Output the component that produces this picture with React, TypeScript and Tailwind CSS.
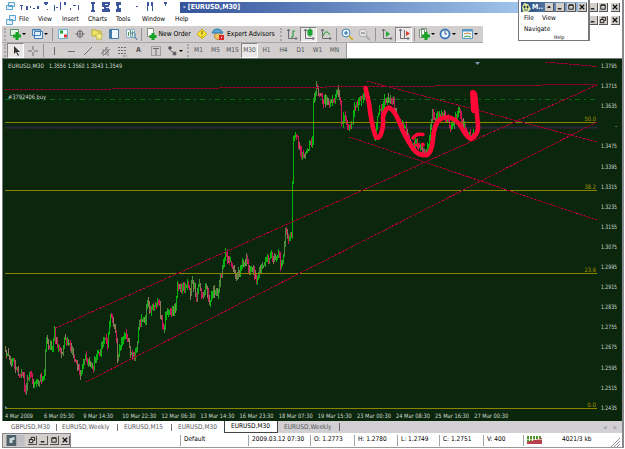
import type { ReactNode } from "react";

const points: [number, number][] = [
  [5, 351], [8, 354], [11, 365], [14, 360], [17, 368], [19, 372], [22, 374], [24, 378], [26, 394], [28, 380], [31, 374],
  [33, 381], [36, 385], [40, 381], [44, 377], [45, 370], [46, 350], [47, 337], [49, 346], [53, 348], [55, 332], [57, 343],
  [60, 348], [63, 353], [64, 345], [66, 337], [70, 347], [74, 354], [77, 363], [80, 370], [82, 374], [85, 356], [89, 363],
  [93, 369], [97, 358], [101, 350], [105, 337], [108, 343], [110, 325], [111, 314], [113, 321], [116, 330], [118, 357],
  [120, 350], [123, 342], [126, 334], [129, 343], [131, 353], [134, 358], [137, 349], [140, 322], [144, 322], [146, 318],
  [148, 301], [151, 309], [154, 310], [157, 305], [160, 307], [162, 322], [164, 329], [167, 315], [170, 308], [174, 312],
  [176, 308], [178, 284], [181, 289], [185, 287], [188, 283], [191, 292], [193, 280], [195, 287], [197, 295], [200, 286],
  [203, 297], [207, 288], [210, 302], [214, 290], [217, 293], [219, 290], [221, 278], [223, 270], [225, 257], [227, 253],
  [229, 263], [232, 263], [236, 275], [240, 275], [243, 265], [247, 260], [250, 270], [254, 268], [257, 282], [260, 272],
  [264, 264], [268, 260], [272, 258], [275, 257], [279, 253], [281, 265], [284, 255], [286, 230], [289, 237], [292, 235],
  [293, 180], [294, 141], [297, 135], [299, 146], [304, 157], [309, 146], [313, 142], [314, 100], [317, 86], [320, 95],
  [323, 100], [327, 99], [331, 106], [335, 98], [338, 91], [341, 99], [342, 125], [345, 112], [348, 130], [353, 125],
  [355, 105], [358, 105], [362, 98], [365, 92], [368, 98], [371, 115], [375, 137], [379, 112], [384, 103], [389, 100],
  [394, 103], [397, 118], [402, 128], [405, 123], [409, 138], [413, 148], [417, 142], [421, 147], [426, 152], [430, 140],
  [433, 110], [436, 120], [440, 116], [445, 114], [450, 125], [455, 120], [460, 112], [464, 125], [468, 133], [474, 135],
];

function noise(x: number) {
  const n = Math.sin(x * 127.1) * 43758.5453;
  return n - Math.floor(n);
}

const bars: { x: number; top: number; bottom: number; color: string }[] = [];
let prev = points[0][1];
for (let i = 0; i < points.length - 1; i++) {
  const [x1, y1] = points[i];
  const [x2, y2] = points[i + 1];
  for (let x = x1; x < x2; x++) {
    const y = y1 + ((y2 - y1) * (x + 1 - x1)) / (x2 - x1) + (noise(x) - 0.5) * 7;
    const up = y < prev;
    const shade = noise(x + 700);
    bars.push({
      x,
      top: Math.min(prev, y) - noise(x + 900) * 5,
      bottom: Math.max(prev, y) + noise(x + 1300) * 5,
      color: up ? (shade > 0.3 ? "#00b40c" : "#4a8a3c") : shade > 0.4 ? "#c81458" : "#8c7558",
    });
    prev = y;
  }
}

const prices = ["1.3795", "1.3715", "1.3635", "-", "1.3475", "1.3395", "1.3315", "1.3235", "1.3155", "1.3075", "1.2995", "1.2915", "1.2835", "1.2755", "1.2675", "1.2595", "1.2515", "1.2435"];
const dates = ["4 Mar 2009", "6 Mar 05:30", "9 Mar 14:30", "10 Mar 22:30", "12 Mar 06:30", "13 Mar 14:30", "16 Mar 23:30", "18 Mar 07:30", "19 Mar 15:30", "23 Mar 00:30", "24 Mar 08:30", "25 Mar 16:30", "27 Mar 00:30"];
const levels: [string, number][] = [["50.0", 122.5], ["38.2", 190.5], ["23.6", 273.5], ["0.0", 408.5]];
const trends = [
  [56, 328, 597, 85],
  [86, 382, 597, 122],
  [367, 81, 597, 142],
  [349, 137, 597, 220],
  [5, 90, 597, 84.5],
  [546, 62, 597, 66.5],
];

function Chart() {
  return (
    <svg viewBox="3 59 619 362" className="block h-[362px] w-[619px] bg-[#0a260c]" fontFamily="'DejaVu Sans Condensed', 'DejaVu Sans', sans-serif" fontSize="6">
      <path d="M5 99.5H597" stroke="#0b6a18" strokeDasharray="5 4 2 4" />
      <path d="M5 127.5H597" stroke="#25263a" strokeWidth="2" />
      <path d="M5 128.5H597" stroke="#431b33" strokeDasharray="1 2" />
      {bars.map((b) => (
        <rect key={b.x} x={b.x} y={Math.round(b.top)} width="1" height={Math.max(2, Math.round(b.bottom - b.top))} fill={b.color} shapeRendering="crispEdges" />
      ))}
      {levels.map(([label, y]) => (
        <g key={label}>
          <path d={`M5 ${y}H597`} stroke="#8d8500" />
          <text x="596" y={y - 1.5} textAnchor="end" fill="#a89600" textLength={label.length * 2.9} lengthAdjust="spacingAndGlyphs">{label}</text>
        </g>
      ))}
      {trends.map(([x1, y1, x2, y2]) => (
        <g key={x1 + "-" + y1} shapeRendering="crispEdges">
          <line x1={x1} y1={y1} x2={x2} y2={y2} stroke="#78001f" />
          <line x1={x1} y1={y1} x2={x2} y2={y2} stroke="#c00a5a" strokeDasharray="1 3" />
        </g>
      ))}
      <g fill="none" stroke="#ff0838" strokeWidth="4.6" strokeLinecap="round" strokeLinejoin="round">
        <path d="M365.500 88L369 103Q371 122 375 135Q378 141 381 134Q384 126 383 117Q386 106 390 108Q396 112 402 129Q409 144 415 151Q420 156 427 155Q432 152 433 139Q434 125 439 120Q447 115 453 119Q459 122 463 130Q467 137 471 139Q479 134 478 125L475 94" />
        <path d="M473 93L474 110" strokeWidth="6" />
        <path d="M413 138Q416 133 423 134.500" strokeWidth="3.500" />
        <path d="M416.500 145l1 .500M423 144l.500 1" strokeWidth="3" />
      </g>
      <path d="M475 62h5l-2.500 3z" fill="#7f96b4" />
      <path d="M5 406l3 2.500h-3z" fill="#7f96b4" />
      <g fill="#d5dbd5">
        <text x="8" y="68" textLength="36" lengthAdjust="spacingAndGlyphs">EURUSD,M30</text>
        <text x="49" y="68" textLength="73" lengthAdjust="spacingAndGlyphs">1.3556 1.3560 1.3543 1.3549</text>
        <text x="8" y="99" textLength="38" lengthAdjust="spacingAndGlyphs">#3792406 buy</text>
        {prices.map((p, i) => (
          <text key={p} x={p === "-" ? 615 : 601} y={68 + i * 20.1} textLength={p === "-" ? 2 : 16} lengthAdjust="spacingAndGlyphs">{p}</text>
        ))}
        {dates.map((d, i) => (
          <text key={d} x={5 + i * 39.1} y="417.500" textLength={i === 0 ? 28 : i < 3 ? 30 : 34} lengthAdjust="spacingAndGlyphs">{d}</text>
        ))}
      </g>
    </svg>
  );
}

function Icon({ children }: { children: ReactNode }) {
  return <svg viewBox="0 0 14 14" className="h-[14px] w-[14px] shrink-0" fill="none" stroke="#6c6c74">{children}</svg>;
}

function Tool({ w = "w-[17px]", pressed, caret, children }: { w?: string; pressed?: boolean; caret?: boolean; children: ReactNode }) {
  return (
    <div className={`flex h-[15px] shrink-0 items-center ${caret ? "pl-px" : "justify-center"} ${w} ${pressed ? "border border-t-[#85858b] border-l-[#85858b] border-white bg-[#e9e8e7]" : ""}`}>
      {children}
      {caret && <span className="h-0 w-0 border-x-[2px] border-t-[2px] border-x-transparent border-t-black" />}
    </div>
  );
}

function Sep({ w }: { w: string }) {
  return <div className={`flex h-[13px] shrink-0 justify-center ${w}`}><i className="h-full w-px bg-[#929298]" /></div>;
}

function Grip() {
  return <div className="flex h-[13px] w-[5px] shrink-0 justify-center"><i className="h-full border-l-2 border-dotted border-[#a6a6ac]" /></div>;
}

function Axes() {
  return <path d="M3.500 2V11.500H12M2 4l1.500-2L5 4M10.500 10l1.500 1.500L10.500 13" />;
}

function WinButton({ kind }: { kind: "min" | "max" | "close" | "restore" | "up" }) {
  return (
    <svg viewBox="0 0 9 9" className="h-[9px] w-[9px] shrink-0 border-r border-b border-[#555] bg-[#d2cfca]" fill="none" stroke="#111">
      {kind === "min" && <path d="M2 6.500h4" strokeWidth="1.500" />}
      {kind === "max" && <path d="M2 2.500h5v4.500H2zM2 2h5" />}
      {kind === "restore" && <path d="M3.500 4V1.500h4V5H6M1.500 4h4v3.500h-4z" />}
      {kind === "close" && <path d="M2 2l5 5M7 2L2 7" strokeWidth="1.400" />}
      {kind === "up" && <path d="M3 5h3L4.500 3.500z" fill="#111" />}
    </svg>
  );
}

function TitleBar() {
  return (
    <div className="flex h-[14px] items-end pb-px pl-[2px]">
      <svg viewBox="0 0 176 12" className="h-[12px] w-[176px]" fill="#3b569a">
        <path d="M4.500 1.500h6v4h-6zM2.500 4.500h6v4h-6z" fill="#e8f4fb" stroke="#5ba3cc" />
        <path d="M16 4h3v1h-3zM17 5h1v4h-1zM22 5h2v4h-2zM26 5h1v2h-1zM29 7h2v1h-2zM33 5h2v3h-2zM40 1h4v2h-4zM41 3h2v1h-2zM43 8h1v1h-1zM50 4h1v6h-1zM52 6h2v1h-2zM56 1h1v8h-1zM60 1h2v3h-2zM66 7h1v2h-1zM69 4h3v1h-3zM74 4h1v5h-1zM87 1h4v2h-1v6h1v2h-4v-2h1V3h-1zM98 1h8v3h-1v4h1v3h-8V8h2V6h-2zM112 1h5v3h-2v3h2v4h-5V8h1V5h-1zM132 5h2v1h-2zM143 1h2v4h-1v5h-1zM147 1h2v9h-1V5h-1zM160 1h3v2h-1v2h-1V3h-1z" />
        <path d="M101 3h3v1h-3zM102 6h3v1h-3z" fill="#e8eefb" />
      </svg>
      <div className="flex h-[11px] w-[340px] items-center bg-linear-to-r from-[#36549b] to-[#a0c4ea] pl-[3px] text-[7px] font-bold text-white">- [EURUSD,M30]</div>
      <div className="ml-auto flex gap-px pr-[2px] pb-px">
        <WinButton kind="min" /><WinButton kind="max" /><span className="w-px" /><WinButton kind="close" />
      </div>
    </div>
  );
}

function MenuBar() {
  return (
    <div className="flex h-[12px] items-center pl-[4px] text-[6.500px]">
      <svg viewBox="0 0 10 10" className="h-[10px] w-[10px]" fill="#e8f4fb" stroke="#5ba3cc"><path d="M3.500.500h6v5h-6zM.500 4.500h6v5h-6z" /></svg>
      <span className="ml-[3px] w-[19px]">File</span>
      <span className="w-[24px]">View</span>
      <span className="w-[26px]">Insert</span>
      <span className="w-[28px]">Charts</span>
      <span className="w-[26px]">Tools</span>
      <span className="w-[33px]">Window</span>
      <span>Help</span>
      <div className="ml-auto flex gap-px pr-[2px]">
        <WinButton kind="min" /><WinButton kind="restore" /><span className="w-px" /><WinButton kind="close" />
      </div>
    </div>
  );
}

function MainToolbar() {
  return (
    <div className="flex h-[17px] w-[481px] items-center border-b border-[#a7a7ab] bg-[#d1cecd] text-[6.800px]">
      <Grip />
      <Tool w="w-[22px]" caret><Icon><path d="M2.500 2.500h8v6h-8z" fill="#e4f3e6" stroke="#58956b" /><path d="M9 5v8M5 9h8" stroke="#14a324" strokeWidth="3" /></Icon></Tool>
      <Tool w="w-[22px]" caret><Icon><path d="M4.500 4.500h8v7h-8zM2.500 2.500h8v6h-8z" fill="#e1effa" stroke="#437eb5" /><path d="M3 3h7" stroke="#437eb5" /></Icon></Tool>
      <Sep w="w-[3px]" />
      <Tool><Icon><path d="M2.500 2.500h9v9h-9z" fill="#eef8ff" stroke="#6eafd5" /><path d="M4 5h3" stroke="#1aa82b" strokeWidth="3" /><path d="M8 9h3" stroke="#db3927" strokeWidth="3" /></Icon></Tool>
      <Tool><Icon><circle cx="7" cy="7" r="3" /><path d="M7 2.500v9M2.500 7h9" /></Icon></Tool>
      <Tool><Icon><path d="M2 3h4l1 1h4v5H2z" fill="#f0e56b" stroke="#b9ac32" /><path d="M9 5l1.500 2.500 2.500.500-2 2 .500 3L9 11.500 6.500 13 7 10 5 8l3-.500z" fill="#f7f08d" stroke="#b9ac32" strokeWidth=".7" /></Icon></Tool>
      <Tool><Icon><path d="M2.500 2.500h9v9h-9z" fill="#f0f8fe" stroke="#427bac" /><path d="M4 3v8" stroke="#427bac" strokeWidth="2" /></Icon></Tool>
      <Tool><Icon><path d="M2.500 2.500h8v8h-8z" fill="#edf1f3" stroke="#8bb0c9" /><path d="M4.500 9V5M6.500 7V3M8.500 9V4" stroke="#569156" /><circle cx="9" cy="8" r="2.500" stroke="#6090b6" /><path d="M11 10l2 3" stroke="#44739b" /></Icon></Tool>
      <Sep w="w-[4px]" />
      <Tool w="w-[50px]">
        <Icon><path d="M3.500 1.500h6v8h-6z" fill="#fff" stroke="#7f9480" /><path d="M9 6v7M5.500 9.500h7" stroke="#14a324" strokeWidth="3" /></Icon>
        <span className="w-[35px] pl-px whitespace-nowrap tracking-[-0.050px]">New Order</span>
      </Tool>
      <Tool><Icon><path d="M7 2l5 5-5 5-5-5z" fill="#f9e63b" stroke="#c7a91d" /><path d="M7 4v3.500M7 9v1" stroke="#594a08" /></Icon></Tool>
      <Tool w="w-[68px]">
        <Icon><circle cx="7" cy="9" r="3.500" fill="#efc65d" stroke="#b5903c" /><path d="M1 6q2-5 6-4t5 4z" fill="#5ba5da" stroke="#2b79b3" /><path d="M8 8h5v5H8z" fill="#dc2727" stroke="none" /><path d="M10 10h1v1h-1z" fill="#fff" stroke="none" /></Icon>
        <span className="w-[52px] pl-[2px] whitespace-nowrap tracking-[-0.020px]">Expert Advisors</span>
      </Tool>
      <Grip />
      <Tool><Icon><Axes /><path d="M6 10h2V4h2" stroke="#16962b" /></Icon></Tool>
      <Tool pressed><Icon><Axes /><path d="M6 3h4v5H6z" fill="#20b936" stroke="#16962b" /><path d="M8 1v9" stroke="#16962b" /></Icon></Tool>
      <Tool><Icon><Axes /><path d="M4 9q3-8 7-1" stroke="#16962b" /></Icon></Tool>
      <Sep w="w-[4px]" />
      <Tool><Icon><circle cx="6" cy="6" r="4" fill="#e5f4ff" stroke="#4286bd" /><path d="M6 4v4M4 6h4" stroke="#2463a0" /><path d="M9 9l4 4" stroke="#d0b53b" strokeWidth="2" /></Icon></Tool>
      <Tool w="w-[18px]"><Icon><circle cx="6" cy="6" r="4" fill="#e1e1e1" stroke="#adadb0" /><path d="M4 6h4" /><path d="M9 9l4 4" stroke="#aaa" strokeWidth="2" /></Icon></Tool>
      <Sep w="w-[5px]" />
      <Tool><Icon><Axes /><path d="M6 4l4 3-4 3z" fill="#20a936" stroke="none" /></Icon></Tool>
      <Tool pressed><Icon><Axes /><path d="M7.500 3v8" /><path d="M13 6.500L9 4v5z" fill="#df3b29" stroke="none" /></Icon></Tool>
      <Sep w="w-[4px]" />
      <Tool w="w-[21px]" caret><Icon><path d="M2.500 2.500h5v8h-5zM4.500 1.500h5v9h-5z" fill="#f4f7f4" stroke="#7c947c" /><path d="M9 5v8M5 9h8" stroke="#14a324" strokeWidth="3" /></Icon></Tool>
      <Tool w="w-[22px]" caret><Icon><circle cx="7" cy="7" r="4.500" fill="#edf7ff" stroke="#3977b8" strokeWidth="1.800" /><path d="M7 4v3h2" stroke="#315579" /></Icon></Tool>
      <Tool w="w-[21px]" caret><Icon><path d="M2.500 2.500h10v9h-10z" fill="#eef8ff" stroke="#5699c5" /><path d="M3 3.500h9" stroke="#5699c5" strokeWidth="2" /><path d="M4 7l3-1 4 1" stroke="#c98235" /><path d="M4 10l3-1 4 1" stroke="#38a344" /></Icon></Tool>
    </div>
  );
}

const frames = ["M1", "M5", "M15", "M30", "H1", "H4", "D1", "W1", "MN"];

function DrawToolbar() {
  return (
    <div className="flex h-[15px] w-[345px] items-center border-r border-[#999] bg-[#d1cecd] text-[6.500px] text-[#505056]">
      <Grip />
      <Tool pressed><Icon><path d="M5 2v8l2-2 2 4 1-1-2-3h3z" fill="#333" stroke="none" /></Icon></Tool>
      <Tool w="w-[18px]"><Icon><path d="M7 2v4M7 8v4M2 7h4M8 7h4" /></Icon></Tool>
      <Sep w="w-[3px]" />
      <Tool><Icon><path d="M7.500 3v8" /></Icon></Tool>
      <Tool><Icon><path d="M4 7.500h7" /></Icon></Tool>
      <Tool><Icon><path d="M3 11l8-8" /></Icon></Tool>
      <Tool><Icon><path d="M3 10l7-7M5 12l7-7M5 5v6M8 3v8M10 5v7" strokeWidth=".8" /></Icon></Tool>
      <Tool><Icon><path d="M3 3.500h9M3 6.500h9M3 9.500h9M8 12h4" strokeDasharray="2 1" /></Icon></Tool>
      <Tool><span className="text-[7px] font-bold">A</span></Tool>
      <Tool><Icon><path d="M2.500 2.500h9v9h-9z" strokeDasharray="1 1" /><path d="M4 4.500h6M7 4v7" /></Icon></Tool>
      <Tool w="w-[21px]" caret><Icon><path d="M3 4l2-2 2 2-2 2zM8 8h3v3H8z" fill="#5b5b62" strokeWidth=".6" /><path d="M5 6l4 3" /></Icon></Tool>
      <Grip />
      {frames.map((f) => (
        <Tool key={f} pressed={f === "M30"}>{f}</Tool>
      ))}
    </div>
  );
}

function Tabs() {
  return (
    <div className="flex h-[12px] items-stretch bg-[#d2d0d3] text-[6.500px] leading-[11px] text-[#55555b]">
      <div className="flex w-[222px] items-center bg-white pl-[9px]">
        <span className="w-[45px]">GBPUSD,M30</span><i className="h-[7px] w-px bg-[#777]" />
        <span className="w-[60px] pl-[5px]">EURUSD,Weekly</span><i className="h-[7px] w-px bg-[#777]" />
        <span className="w-[53px] pl-[6px]">EURUSD,M15</span><i className="h-[7px] w-px bg-[#777]" />
        <span className="pl-[6px]">EURUSD,M30</span>
      </div>
      <div className="w-[54px] border-x border-b border-[#444] bg-white pl-[6px] text-black">EURUSD,M30</div>
      <div className="my-[2px] w-[62px] border-r border-[#666] pl-[6px] leading-[8px]">EURUSD,Weekly</div>
      <div className="ml-auto flex items-center gap-[7px] pr-[5px] text-[5px] text-[#a6a6ac]"><span>◀</span><span>▶</span></div>
    </div>
  );
}

function StatusBar() {
  return (
    <div className="flex h-[15px] items-center border-b border-[#999] text-[6.500px]">
      <div className="flex h-[15px] w-[69px] items-center gap-[2px] border border-[#85858a] bg-[#d2cfcd] pl-[2px]">
        <svg viewBox="0 0 18 11" className="h-[11px] w-[21px]"><path d="M0 0h10v11H0z" fill="#51616b" /><path d="M3 3h3v5H3zM6 2h2v3H6z" fill="#c6dbdc" /><path d="M10 0h8v11h-8z" fill="#bec0c3" /></svg>
        <WinButton kind="restore" /><WinButton kind="min" /><WinButton kind="max" /><WinButton kind="close" />
      </div>
      <div className="ml-[109px] flex h-[11px] items-center whitespace-nowrap *:flex *:h-full *:items-center *:border-l *:border-[#a4a4aa] *:pl-[3px]">
        <span className="w-[68px]">Default</span>
        <span className="w-[62px]">2009.03.12 07:30</span>
        <span className="w-[44px]">O: 1.2773</span>
        <span className="w-[43px]">H: 1.2780</span>
        <span className="w-[42px]">L: 1.2749</span>
        <span className="w-[44px]">C: 1.2751</span>
        <span className="w-[40px]">V: 400</span>
        <span className="w-[38px]">
          <svg viewBox="0 0 15 8" className="h-[8px] w-[15px]" shapeRendering="crispEdges"><path d="M0 4h15" stroke="#519629" strokeWidth="8" strokeDasharray="2 1" /><path d="M0 8V6l15-4v6z" fill="#b8404b" /><path d="M0 3.500h15" stroke="#fff" strokeWidth=".6" /></svg>
        </span>
      </div>
      <span className="pl-px">4021/3 kb</span>
      <svg viewBox="0 0 9 9" className="mt-auto mr-[2px] ml-auto h-[9px] w-[9px]" stroke="#909096"><path d="M0 9l9-9M3 9l6-6M6 9l3-3" /></svg>
    </div>
  );
}

function FloatingWindow() {
  return (
    <div className="absolute top-0 left-[518px] flex h-[41px] w-[72px] flex-col border-r-2 border-b border-l border-[#77777c] bg-white text-[6.500px]">
      <div className="mt-[2px] ml-[2px] flex h-[10px] w-[66px] items-center bg-linear-to-r from-[#254779] to-[#a2c5e6]">
        <svg viewBox="0 0 10 10" className="h-[10px] w-[10px]"><path d="M1 5l2-4 4 1 3 5-3 3H2z" fill="#dce6a4" /><path d="M3 4h1v2H3zM6 4h1v2H6zM3 8h4" fill="#263d39" stroke="#263d39" strokeWidth=".7" /></svg>
        <span className="w-[14px] pl-px text-[7px] font-bold text-white">M..</span>
        <div className="flex gap-[2px]"><WinButton kind="up" /><WinButton kind="min" /><WinButton kind="max" /><WinButton kind="close" /></div>
      </div>
      <div className="flex h-[13px] items-center pl-[5px]"><span className="w-[18px]">File</span><span>View</span></div>
      <div className="h-[9px] pl-[5px] leading-[9px]">Navigate</div>
      <div className="h-[6px] pl-[35px] text-[5px] leading-[6px]">Help</div>
    </div>
  );
}

export default function App() {
  return (
    <div className="relative h-[449px] w-[625px] overflow-hidden bg-white font-['DejaVu_Sans_Condensed','DejaVu_Sans',sans-serif] text-black">
      <div className="flex h-[448px] w-[624px] flex-col border-r-2 border-[#88888c] pl-[2px]">
        <TitleBar />
        <MenuBar />
        <MainToolbar />
        <DrawToolbar />
        <div className="h-[363px] border-t border-l border-[#777b80]"><Chart /></div>
        <Tabs />
        <StatusBar />
      </div>
      <FloatingWindow />
    </div>
  );
}
